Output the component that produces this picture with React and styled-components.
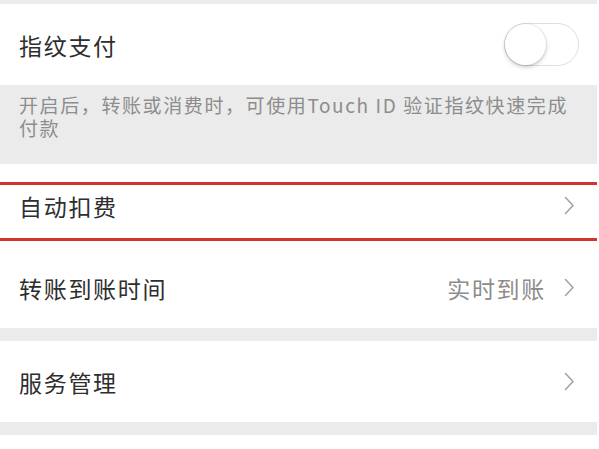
import React from 'react';
import styled, { createGlobalStyle } from 'styled-components';

const GlobalStyle = createGlobalStyle`
  html, body {
    margin: 0;
    padding: 0;
    background: #fff;
  }
  body {
    font-family: "Noto Sans CJK SC", "Noto Sans", sans-serif;
    -webkit-font-smoothing: antialiased;
  }
`;

const Page = styled.div`
  width: 597px;
  height: 449px;
  overflow: hidden;
  padding-top: 4px;
  box-sizing: border-box;
  background: #ebebeb;
`;

const Section = styled.div`
  background: #fff;
  margin-bottom: ${({ gap }) => gap || 0}px;
`;

const Row = styled.div`
  position: relative;
  height: ${({ h }) => h || 81}px;
  display: flex;
  align-items: center;
  padding: 0 22px 0 19px;
`;

const Title = styled.span`
  flex: 1;
  font-size: 23px;
  letter-spacing: 1.7px;
  color: #2e2e2e;
`;

const Value = styled.span`
  font-size: 23px;
  letter-spacing: 1.7px;
  color: #8c8c8c;
  margin-right: 18px;
`;

const Note = styled.div`
  height: 79px;
  box-sizing: border-box;
  padding: 8px 22px 0 19px;
  font-size: 19px;
  line-height: 23px;
  letter-spacing: 1.6px;
  color: #8d8d8d;
`;

const Switch = styled.div`
  position: relative;
  width: 75px;
  height: 43px;
  margin-right: -4px;
  border-radius: 22px;
  border: 1.5px solid #dedede;
  box-sizing: border-box;
  background: #fff;
`;

const Knob = styled.div`
  position: absolute;
  top: -0.5px;
  left: -0.5px;
  width: 41px;
  height: 41px;
  border-radius: 50%;
  background: #fff;
  box-shadow: 0 2px 4px rgba(0, 0, 0, 0.22), 0 0 0 1px rgba(0, 0, 0, 0.05);
`;

const Marker = styled.div`
  position: absolute;
  left: 0;
  right: -2px;
  top: 18px;
  height: 53px;
  border-top: 3px solid #d6322c;
  border-bottom: 3px solid #d6322c;
  pointer-events: none;
`;

const Chevron = () => (
  <svg width="11" height="19" viewBox="0 0 11 19" fill="none">
    <path d="M1.5 1.5L9 9.5L1.5 17.5" stroke="#a3a3a3" strokeWidth="1.6" strokeLinecap="round" strokeLinejoin="round" />
  </svg>
);

const App = () => (
  <>
    <GlobalStyle />
    <Page>
      <Section>
        <Row>
          <Title>指纹支付</Title>
          <Switch>
            <Knob />
          </Switch>
        </Row>
      </Section>
      <Note>开启后，转账或消费时，可使用Touch ID 验证指纹快速完成付款</Note>
      <Section gap={13}>
        <Row h={83}>
          <Title>自动扣费</Title>
          <Chevron />
          <Marker />
        </Row>
        <Row h={81}>
          <Title>转账到账时间</Title>
          <Value>实时到账</Value>
          <Chevron />
        </Row>
      </Section>
      <Section gap={13}>
        <Row>
          <Title>服务管理</Title>
          <Chevron />
        </Row>
      </Section>
      <Section>
        <Row />
      </Section>
    </Page>
  </>
);

export default App;
